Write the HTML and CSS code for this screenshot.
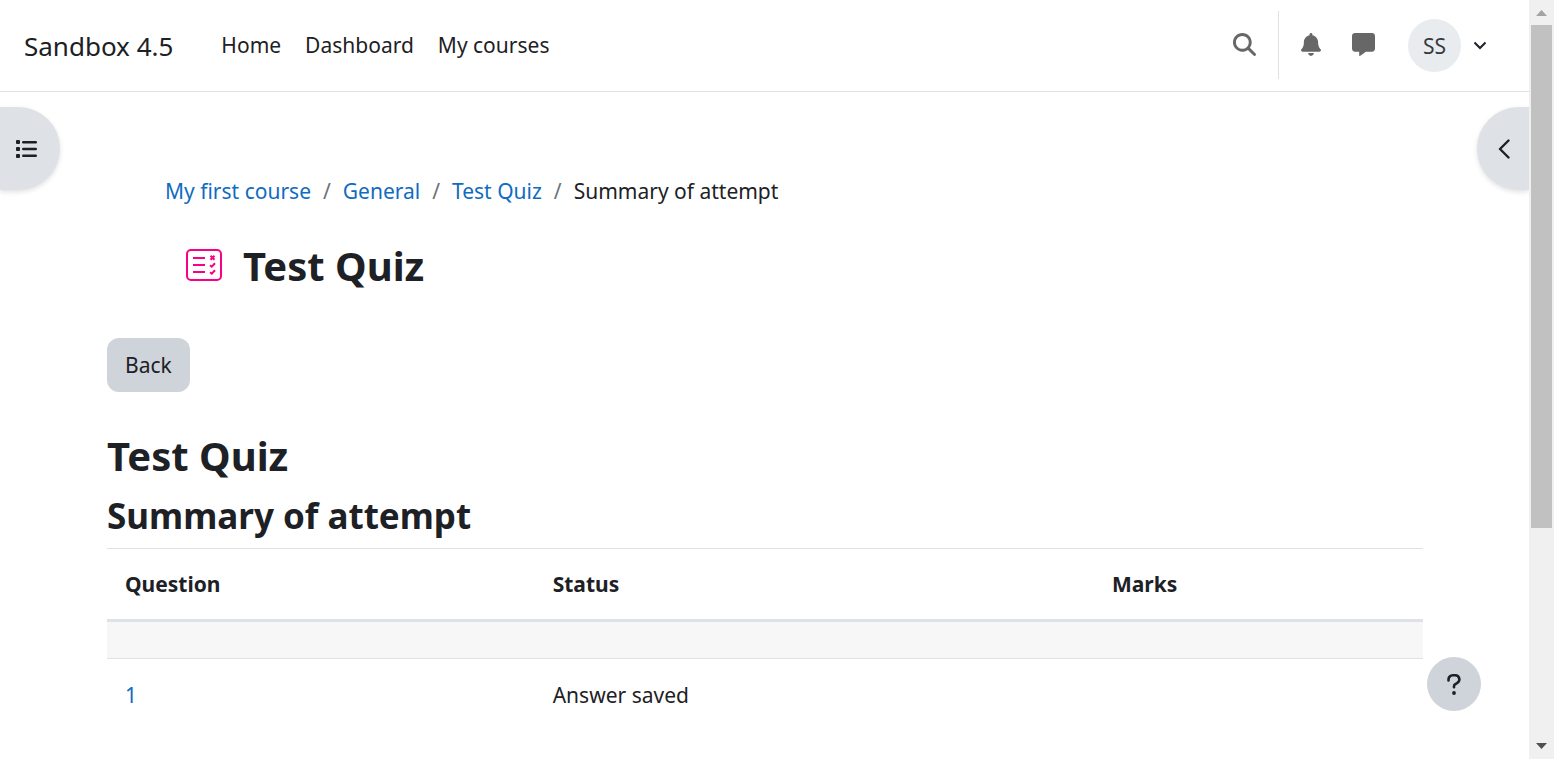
FILE: index.html
```html
<!DOCTYPE html>
<html lang="en">
<head>
<meta charset="utf-8">
<title>Test Quiz | Sandbox 4.5</title>
<link rel="stylesheet" href="styles.css">
</head>
<body>
<div class="window">
  <div class="page">
    <header class="navbar">
      <a class="brand" href="#">Sandbox 4.5</a>
      <nav class="primary-nav">
        <a href="#">Home</a>
        <a href="#">Dashboard</a>
        <a href="#">My courses</a>
      </nav>
      <div class="user-nav">
        <button class="icon-button search" type="button" aria-label="Search">
          <svg width="23" height="23" viewBox="0 0 512 512"><path d="M416 208c0 45.900-14.900 88.300-40 122.700L502.600 457.400c12.500 12.500 12.500 32.800 0 45.300s-32.800 12.500-45.300 0L330.700 376c-34.400 25.200-76.800 40-122.700 40C93.100 416 0 322.900 0 208S93.100 0 208 0S416 93.100 416 208zM208 352a144 144 0 1 0 0-288 144 144 0 1 0 0 288z"/></svg>
        </button>
        <button class="icon-button" type="button" aria-label="Notifications">
          <svg width="20" height="23" viewBox="0 0 448 512"><path d="M224 0c-17.700 0-32 14.300-32 32V51.200C119 66 64 130.600 64 208v18.800c0 47-17.300 92.400-48.500 127.600l-7.400 8.300c-8.400 9.400-10.400 22.900-5.300 34.400S19.400 416 32 416H416c12.600 0 24-7.400 29.200-18.900s3.100-25-5.300-34.400l-7.400-8.300C401.300 319.200 384 273.900 384 226.800V208c0-77.400-55-142-128-156.800V32c0-17.700-14.300-32-32-32zm45.300 493.300c12-12 18.700-28.300 18.700-45.300H160c0 17 6.700 33.300 18.700 45.300s28.300 18.700 45.300 18.700s33.300-6.700 45.300-18.700z"/></svg>
        </button>
        <button class="icon-button" type="button" aria-label="Messages">
          <svg width="23" height="23" viewBox="0 0 512 512"><path d="M64 0C28.700 0 0 28.700 0 64V352c0 35.300 28.700 64 64 64h96v80c0 6.100 3.400 11.600 8.800 14.300s11.900 2.100 16.800-1.500L309.300 416H448c35.300 0 64-28.700 64-64V64c0-35.300-28.700-64-64-64H64z"/></svg>
        </button>
        <button class="user-menu" type="button" aria-label="User menu">
          <span class="avatar">SS</span>
          <svg width="14" height="9" viewBox="0 0 14 9"><path d="M1.500 1.500 7 7l5.500-5.500"/></svg>
        </button>
      </div>
    </header>

    <button class="drawer drawer-left" type="button" aria-label="Open course index">
      <svg width="22" height="18" viewBox="0 0 22 18"><rect x="0" y="0" width="4" height="4" rx="1"/><rect x="0" y="7" width="4" height="4" rx="1"/><rect x="0" y="14" width="4" height="4" rx="1"/><rect x="6" y="1" width="15" height="2.400" rx="1.200"/><rect x="6" y="7.800" width="15" height="2.400" rx="1.200"/><rect x="6" y="14.600" width="15" height="2.400" rx="1.200"/></svg>
    </button>
    <button class="drawer drawer-right" type="button" aria-label="Open block drawer">
      <svg width="13" height="20" viewBox="0 0 13 20"><path d="M10.500 1.500 2 10l8.500 8.500"/></svg>
    </button>

    <main class="content">
      <div class="page-header">
        <nav aria-label="Breadcrumb">
          <ol class="breadcrumb">
            <li><a href="#">My first course</a></li>
            <li><a href="#">General</a></li>
            <li><a href="#">Test Quiz</a></li>
            <li>Summary of attempt</li>
          </ol>
        </nav>
        <div class="activity">
          <svg width="36" height="32" viewBox="0 0 36 32"><rect x="1" y="1" width="34" height="30" rx="4"/><path d="M7 9h12M7 16h12M7 23h12"/><path class="mark" d="m24.500 6.800 4 4m0-4-4 4M24 16.200l1.800 1.500 3.200-3.400M24 23.200l1.800 1.500 3.200-3.400"/></svg>
          <h1>Test Quiz</h1>
        </div>
      </div>

      <button class="back" type="button">Back</button>

      <h2>Test Quiz</h2>
      <h3>Summary of attempt</h3>
      <table class="summary">
        <thead>
          <tr><th class="col-question" scope="col">Question</th><th class="col-status" scope="col">Status</th><th scope="col">Marks</th></tr>
        </thead>
        <tbody>
          <tr class="section"><td colspan="3"></td></tr>
          <tr><td><a href="#">1</a></td><td>Answer saved</td><td></td></tr>
        </tbody>
      </table>
    </main>

    <button class="help" type="button" aria-label="Help">
      <svg width="14" height="22" viewBox="0 0 14 22"><path d="M1.500 7.500V6.500A4.200 4.200 0 0 1 5.700 2.300h2.500a4.100 4.100 0 0 1 2 7.700L8 11.400a2.200 2.200 0 0 0-1 1.900v1"/><circle cx="7" cy="20" r="1.900"/></svg>
    </button>
  </div>

  <div class="scrollbar" aria-hidden="true">
    <svg class="arrow-up" width="11" height="6" viewBox="0 0 11 6"><path d="M5.500 0 11 6H0z"/></svg>
    <div class="track"><div class="thumb"></div></div>
    <svg class="arrow-down" width="11" height="6" viewBox="0 0 11 6"><path d="M0 0h11L5.500 6z"/></svg>
  </div>
</div>
</body>
</html>
```

FILE: styles.css
```css
* {
  box-sizing: border-box;
}

body {
  margin: 0;
  background: #fff;
  color: #1d2125;
  font: 21px/34px "Segoe UI", "Noto Sans", sans-serif;
}

a {
  color: #0f6cbf;
  text-decoration: none;
}

button {
  border: 0;
  padding: 0;
  background: none;
  color: inherit;
  font: inherit;
  cursor: pointer;
}

svg {
  display: block;
}

.window {
  display: grid;
  grid-template-columns: minmax(0, 1fr) 25px;
  height: 100vh;
}

.page {
  position: relative;
  overflow: hidden;
}

/* Top bar */
.navbar {
  display: flex;
  align-items: center;
  height: 92px;
  padding: 0 42px 0 24px;
  border-bottom: 1px solid #dee2e6;
}

.navbar a {
  color: #1d2125;
}

.brand {
  margin-right: 48px;
  font-size: 26px;
}

.primary-nav {
  display: flex;
  gap: 24px;
  padding-bottom: 2px;
}

.user-nav {
  display: flex;
  align-items: center;
  margin-left: auto;
}

.icon-button {
  display: flex;
  align-items: center;
  justify-content: center;
  width: 52px;
  height: 68px;
  margin-bottom: 2px;
  fill: #676767;
}

.search {
  width: 69px;
  margin-right: 6px;
  border-right: 1px solid #dee2e6;
}

.user-menu {
  display: flex;
  align-items: center;
  gap: 12px;
  margin-left: 19px;
  fill: none;
  stroke: #1d2125;
  stroke-width: 2;
}

.avatar {
  display: grid;
  place-items: center;
  width: 53px;
  height: 53px;
  border-radius: 50%;
  background: #e9ecef;
  color: #343a40;
}

/* Drawer toggles */
.drawer {
  position: absolute;
  top: 107px;
  display: flex;
  align-items: center;
  height: 83px;
  background: #dee2e6;
  box-shadow: 0 2px 5px rgba(0, 0, 0, 0.12);
}

.drawer-left {
  left: 0;
  width: 60px;
  padding-left: 16px;
  border-radius: 0 42px 42px 0;
  fill: #1d2125;
}

.drawer-right {
  right: 0;
  width: 52px;
  padding-left: 21px;
  border-radius: 42px 0 0 42px;
  fill: none;
  stroke: #1d2125;
  stroke-width: 2.4;
  stroke-linecap: round;
  stroke-linejoin: round;
}

/* Main column */
.content {
  padding: 82px 106px 0 107px;
}

.page-header {
  padding: 0 58px;
}

.breadcrumb {
  display: flex;
  margin: 0;
  padding: 0;
  list-style: none;
}

.breadcrumb li + li::before {
  content: "/";
  padding: 0 12px;
  color: #6a737b;
}

.activity {
  display: flex;
  align-items: center;
  gap: 21px;
  margin: 32px 0 46px;
  padding-left: 21px;
}

.activity svg {
  margin-bottom: 2px;
  fill: none;
  stroke: #f90086;
  stroke-width: 2;
}

h1,
h2,
h3 {
  margin: 0;
  font-weight: 700;
}

h1,
h2 {
  font-size: 40px;
  line-height: 52px;
}

h3 {
  font-size: 35px;
  line-height: 44px;
}

.back {
  display: block;
  height: 54px;
  margin-bottom: 38px;
  padding: 0 18px;
  border-radius: 12px;
  background: #ced4da;
}

h2 {
  margin-bottom: 12px;
}

.summary {
  width: 100%;
  margin-top: 10px;
  table-layout: fixed;
  border-spacing: 0;
}

.summary th,
.summary td {
  height: 72px;
  padding: 0 18px;
  border-top: 1px solid #dee2e6;
  text-align: left;
}

.summary th {
  height: 74px;
  border-bottom: 3px solid #dee2e6;
  font-weight: 700;
}

.summary .section td {
  height: 36px;
  border-top: 0;
  background: #f7f7f7;
}

.col-question {
  width: 32.5%;
}

.col-status {
  width: 42.5%;
}

.help {
  position: absolute;
  right: 48px;
  bottom: 48px;
  display: grid;
  place-items: center;
  width: 54px;
  height: 54px;
  border-radius: 50%;
  background: #ced4da;
}

.help path {
  fill: none;
  stroke: #1d2125;
  stroke-width: 2.6;
  stroke-linecap: round;
}

.help circle {
  fill: #1d2125;
}

/* Scrollbar */
.scrollbar {
  display: flex;
  flex-direction: column;
  align-items: center;
  gap: 9px;
  padding: 10px 2px;
  background: #f0f0f0;
}

.track {
  flex: 1;
  width: 100%;
}

.thumb {
  height: 71%;
  background: #c1c1c1;
}

.arrow-up {
  fill: #a3a3a3;
}

.arrow-down {
  fill: #505050;
}
```
